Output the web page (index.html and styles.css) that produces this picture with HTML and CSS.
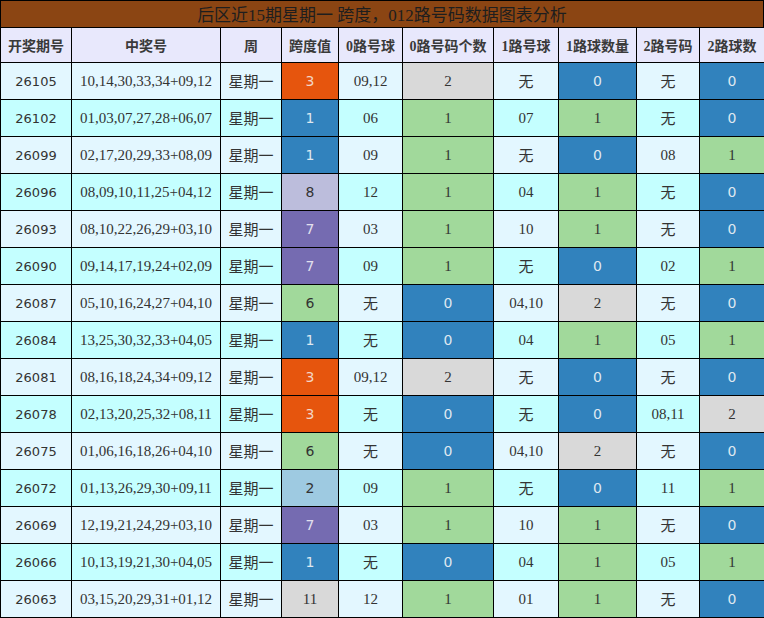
FILE: index.html
```html
<!DOCTYPE html>
<html lang="zh">
<head>
<meta charset="utf-8">
<title>后区近15期星期一 跨度，012路号码数据图表分析</title>
<link rel="stylesheet" href="styles.css">
</head>
<body>
<div class="wrap">
<div class="title">后区近15期星期一 跨度，012路号码数据图表分析</div>
<table class="grid">
<colgroup>
<col class="c1"><col class="c2"><col class="c3"><col class="c4"><col class="c5"><col class="c6"><col class="c7"><col class="c8"><col class="c9"><col class="c10">
</colgroup>
<thead>
<tr><th>开奖期号</th><th>中奖号</th><th>周</th><th>跨度值</th><th>0路号球</th><th>0路号码个数</th><th>1路号球</th><th>1路球数量</th><th>2路号码</th><th>2路球数</th></tr>
</thead>
<tbody>
<tr class="ra"><td class="iss">26105</td><td>10,14,30,33,34+09,12</td><td class="cj">星期一</td><td class="sp s3">3</td><td>09,12</td><td class="n2">2</td><td class="cj">无</td><td class="n0">0</td><td class="cj">无</td><td class="n0">0</td></tr>
<tr class="rb"><td class="iss">26102</td><td>01,03,07,27,28+06,07</td><td class="cj">星期一</td><td class="sp s1">1</td><td>06</td><td class="n1">1</td><td>07</td><td class="n1">1</td><td class="cj">无</td><td class="n0">0</td></tr>
<tr class="ra"><td class="iss">26099</td><td>02,17,20,29,33+08,09</td><td class="cj">星期一</td><td class="sp s1">1</td><td>09</td><td class="n1">1</td><td class="cj">无</td><td class="n0">0</td><td>08</td><td class="n1">1</td></tr>
<tr class="rb"><td class="iss">26096</td><td>08,09,10,11,25+04,12</td><td class="cj">星期一</td><td class="sp s8">8</td><td>12</td><td class="n1">1</td><td>04</td><td class="n1">1</td><td class="cj">无</td><td class="n0">0</td></tr>
<tr class="ra"><td class="iss">26093</td><td>08,10,22,26,29+03,10</td><td class="cj">星期一</td><td class="sp s7">7</td><td>03</td><td class="n1">1</td><td>10</td><td class="n1">1</td><td class="cj">无</td><td class="n0">0</td></tr>
<tr class="rb"><td class="iss">26090</td><td>09,14,17,19,24+02,09</td><td class="cj">星期一</td><td class="sp s7">7</td><td>09</td><td class="n1">1</td><td class="cj">无</td><td class="n0">0</td><td>02</td><td class="n1">1</td></tr>
<tr class="ra"><td class="iss">26087</td><td>05,10,16,24,27+04,10</td><td class="cj">星期一</td><td class="sp s6">6</td><td class="cj">无</td><td class="n0">0</td><td>04,10</td><td class="n2">2</td><td class="cj">无</td><td class="n0">0</td></tr>
<tr class="rb"><td class="iss">26084</td><td>13,25,30,32,33+04,05</td><td class="cj">星期一</td><td class="sp s1">1</td><td class="cj">无</td><td class="n0">0</td><td>04</td><td class="n1">1</td><td>05</td><td class="n1">1</td></tr>
<tr class="ra"><td class="iss">26081</td><td>08,16,18,24,34+09,12</td><td class="cj">星期一</td><td class="sp s3">3</td><td>09,12</td><td class="n2">2</td><td class="cj">无</td><td class="n0">0</td><td class="cj">无</td><td class="n0">0</td></tr>
<tr class="rb"><td class="iss">26078</td><td>02,13,20,25,32+08,11</td><td class="cj">星期一</td><td class="sp s3">3</td><td class="cj">无</td><td class="n0">0</td><td class="cj">无</td><td class="n0">0</td><td>08,11</td><td class="n2">2</td></tr>
<tr class="ra"><td class="iss">26075</td><td>01,06,16,18,26+04,10</td><td class="cj">星期一</td><td class="sp s6">6</td><td class="cj">无</td><td class="n0">0</td><td>04,10</td><td class="n2">2</td><td class="cj">无</td><td class="n0">0</td></tr>
<tr class="rb"><td class="iss">26072</td><td>01,13,26,29,30+09,11</td><td class="cj">星期一</td><td class="sp s2">2</td><td>09</td><td class="n1">1</td><td class="cj">无</td><td class="n0">0</td><td>11</td><td class="n1">1</td></tr>
<tr class="ra"><td class="iss">26069</td><td>12,19,21,24,29+03,10</td><td class="cj">星期一</td><td class="sp s7">7</td><td>03</td><td class="n1">1</td><td>10</td><td class="n1">1</td><td class="cj">无</td><td class="n0">0</td></tr>
<tr class="rb"><td class="iss">26066</td><td>10,13,19,21,30+04,05</td><td class="cj">星期一</td><td class="sp s1">1</td><td class="cj">无</td><td class="n0">0</td><td>04</td><td class="n1">1</td><td>05</td><td class="n1">1</td></tr>
<tr class="ra"><td class="iss">26063</td><td>03,15,20,29,31+01,12</td><td class="cj">星期一</td><td class="sp s11">11</td><td>12</td><td class="n1">1</td><td>01</td><td class="n1">1</td><td class="cj">无</td><td class="n0">0</td></tr>
</tbody>
</table>
</div>
</body>
</html>
```

FILE: styles.css
```css
html, body {
  margin: 0;
  padding: 0;
  background: #ffffff;
}
body {
  font-family: "Liberation Serif", "Noto Sans CJK SC", serif;
  color: #333333;
}
.wrap {
  width: 764px;
}
.title {
  height: 27px;
  line-height: 29px;
  background: #8b4513;
  color: #1e1e1e;
  font-size: 17px;
  text-align: center;
  border: 1px solid #000;
  border-bottom: none;
  box-sizing: border-box;
}
.grid {
  width: 764px;
  border-collapse: collapse;
  table-layout: fixed;
}
.c1 { width: 71px; }
.c2 { width: 149px; }
.c3 { width: 61px; }
.c4 { width: 57px; }
.c5 { width: 64px; }
.c6 { width: 91px; }
.c7 { width: 65px; }
.c8 { width: 78px; }
.c9 { width: 63px; }
.c10 { width: 65px; }
.grid th, .grid td {
  border: 1px solid #000;
  text-align: center;
  padding: 0;
}
.grid th {
  height: 34px;
  background: #e8e8fc;
  font-size: 14px;
  font-weight: bold;
  color: #3a3a3a;
}
.grid td {
  height: 36px;
  font-size: 15px;
  color: #333;
}
.ra td { background: #e3f7ff; }
.rb td { background: #c4ffff; }
.grid td.iss {
  font-family: "DejaVu Sans", "Noto Sans CJK SC", sans-serif;
  font-size: 13px;
}
.grid td.cj {
  font-family: "Noto Sans CJK SC", sans-serif;
  font-size: 15px;
  line-height: 22px;
}
.grid td.sp {
  font-family: "DejaVu Sans", sans-serif;
  font-size: 14px;
}
.grid td.s1 { background: #3182bd; color: #dfe8f0; }
.grid td.s2 { background: #9ecae1; color: #333; }
.grid td.s3 { background: #e6550d; color: #f3d6c6; }
.grid td.s6 { background: #a1d99b; color: #333; }
.grid td.s7 { background: #756bb1; color: #e2e0ee; }
.grid td.s8 { background: #bcbddc; color: #333; }
.grid td.s11 { background: #d9d9d9; color: #333; font-family: "Liberation Serif", serif; font-size: 15px; }
.grid td.n0 { background: #3182bd; color: #dfe8f0; font-family: "DejaVu Sans", sans-serif; font-size: 14px; }
.grid td.n1 { background: #a1d99b; }
.grid td.n2 { background: #d9d9d9; }
```
